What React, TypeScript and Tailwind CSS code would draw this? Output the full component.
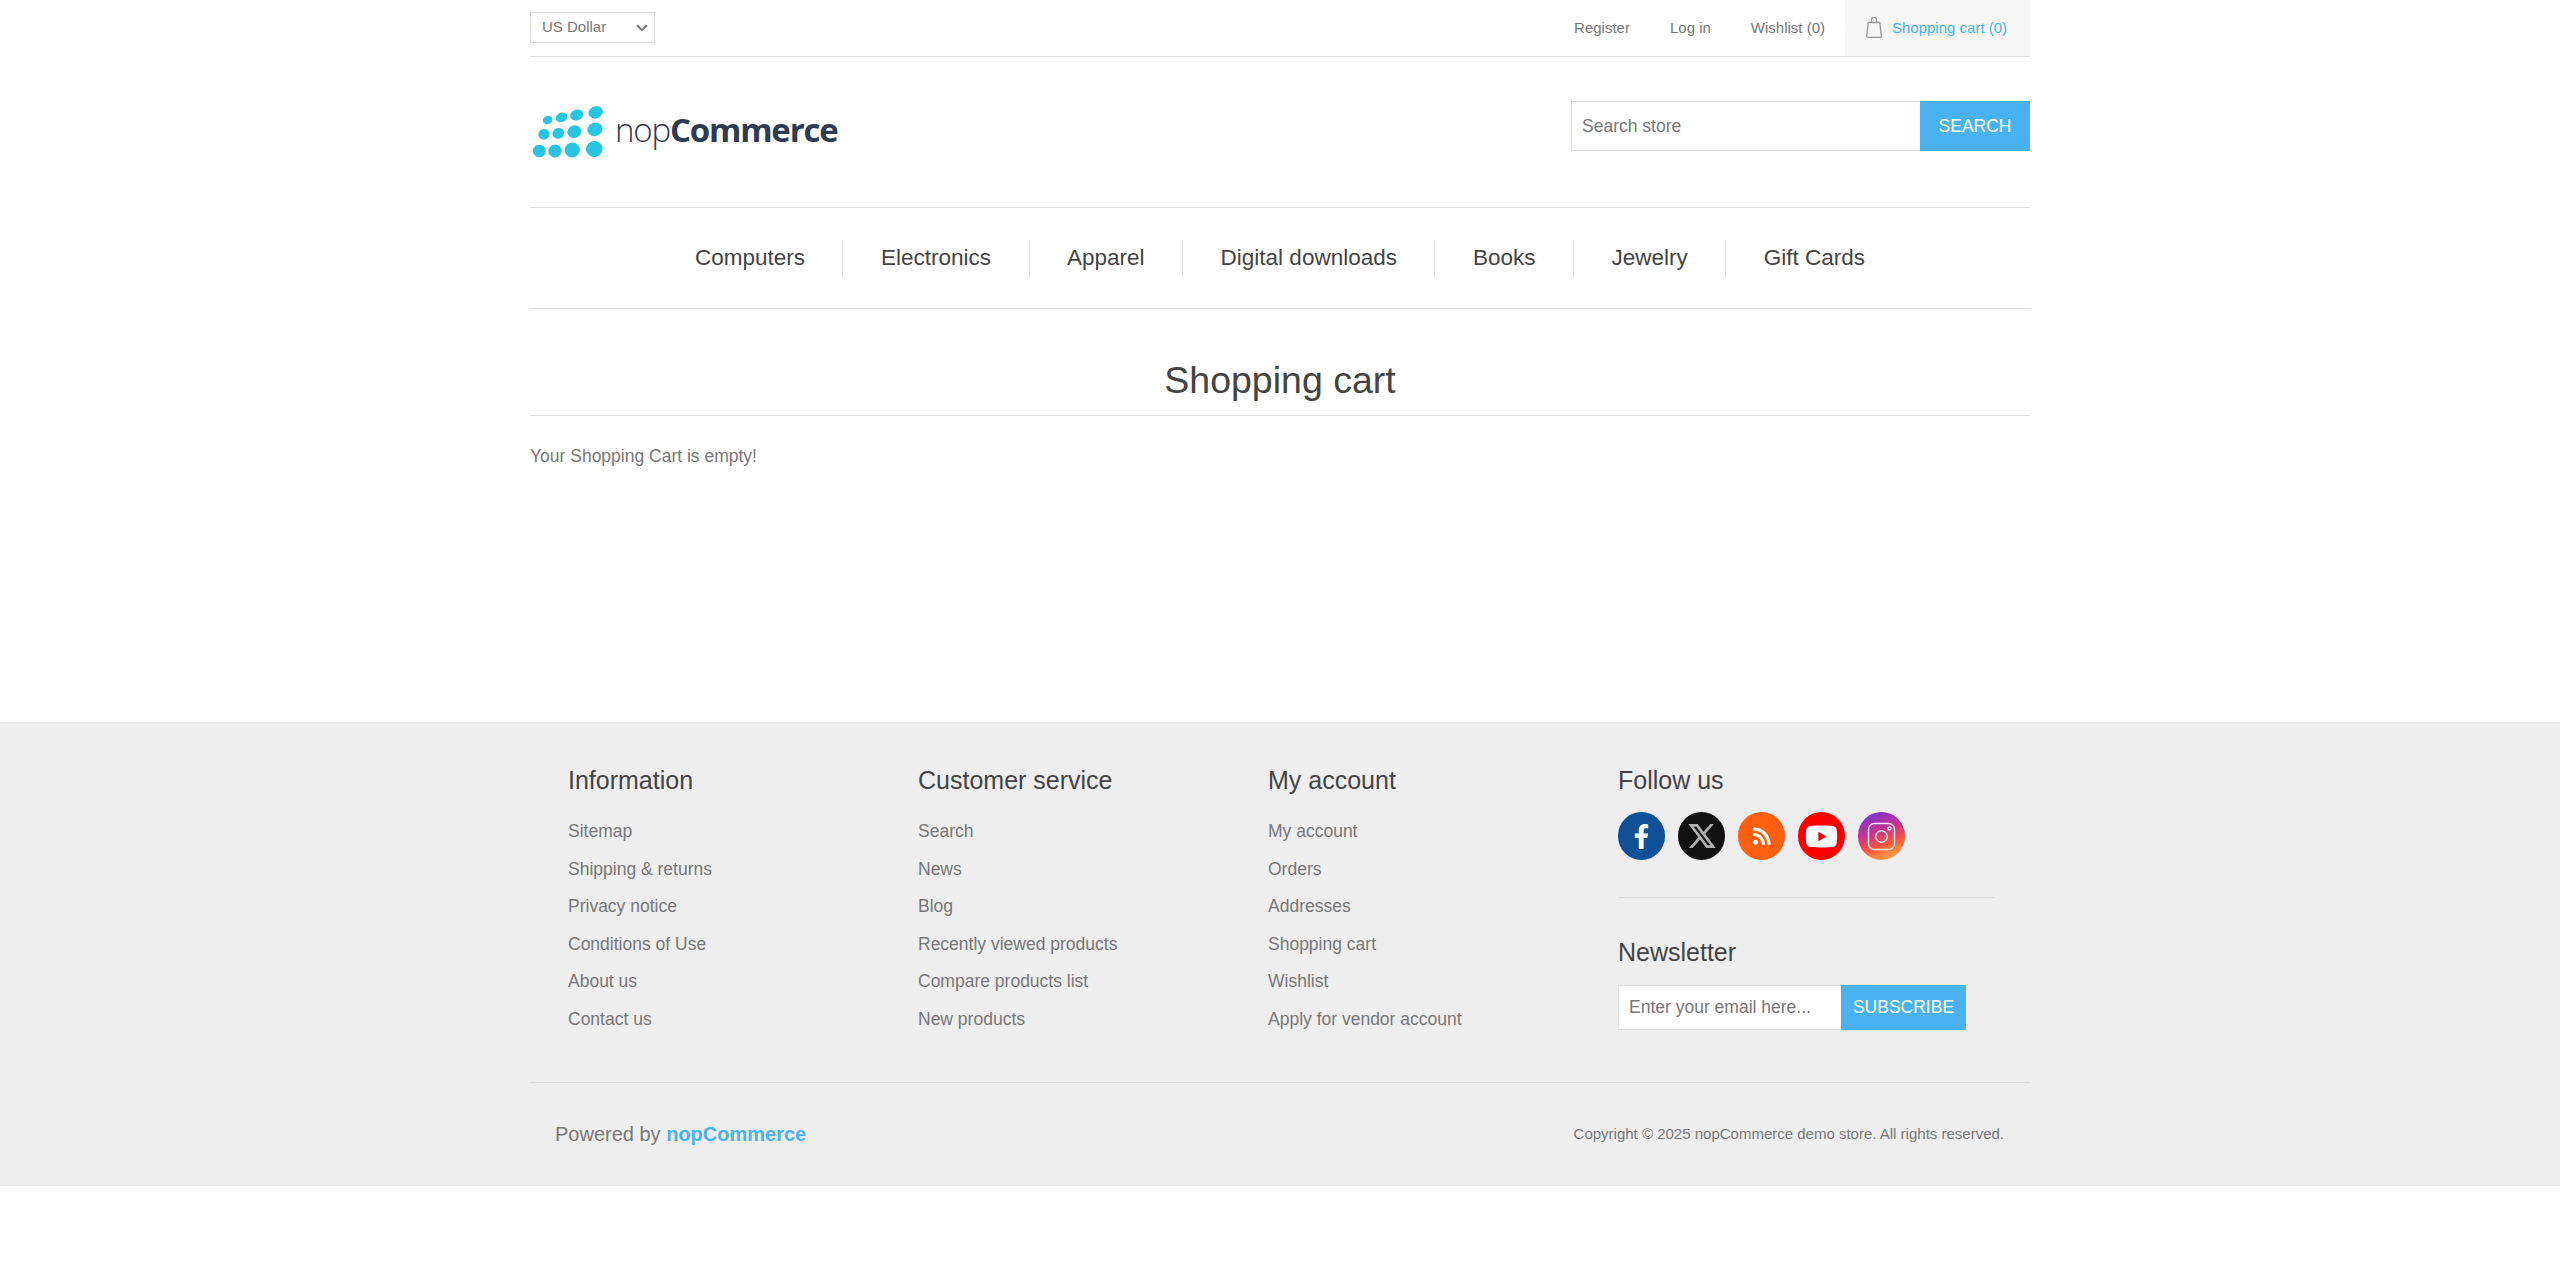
import { FaFacebookF, FaRss, FaYoutube } from "react-icons/fa";
import { RiTwitterXLine } from "react-icons/ri";

const menu = ["Computers", "Electronics", "Apparel", "Digital downloads", "Books", "Jewelry", "Gift Cards"];

const columns = [
  { title: "Information", links: ["Sitemap", "Shipping & returns", "Privacy notice", "Conditions of Use", "About us", "Contact us"] },
  { title: "Customer service", links: ["Search", "News", "Blog", "Recently viewed products", "Compare products list", "New products"] },
  { title: "My account", links: ["My account", "Orders", "Addresses", "Shopping cart", "Wishlist", "Apply for vendor account"] },
];

const dots = [
  [113, 360, 15, 12], [155, 352, 18, 14], [200, 345, 20, 16], [257, 337, 22, 18],
  [102, 403, 17, 16], [145, 400, 18, 16], [193, 395, 21, 19], [255, 388, 23, 20],
  [88, 453, 19, 19], [135, 453, 20, 19], [187, 450, 23, 22], [253, 447, 25, 24],
];

function Logo() {
  return (
    <div className="flex items-center h-[60px] pl-[1px]">
      <svg width="72" height="54" viewBox="63 315 216 162" className="shrink-0">
        {dots.map(([cx, cy, rx, ry], i) => (
          <ellipse key={i} cx={cx} cy={cy} rx={rx} ry={ry} fill="#26c6e3" transform={`rotate(-20 ${cx} ${cy})`} />
        ))}
      </svg>
      <div className="ml-[12px] mb-[5px] text-[33px] tracking-[-1.2px] leading-none text-[#2f3b4f] font-['Open_Sans',sans-serif]">
        <span className="font-light">nop</span>
        <span className="font-bold">Commerce</span>
      </div>
    </div>
  );
}

function BagIcon() {
  return (
    <svg width="16" height="21" viewBox="0 0 16 21" fill="none" stroke="#999999" strokeWidth="1.3" className="mr-[9px] -mt-[2px]">
      <path d="M2.2 5.5h11.6l1.5 13.6a1.2 1.2 0 0 1-1.2 1.3H1.9a1.2 1.2 0 0 1-1.2-1.3z" strokeLinejoin="round" />
      <path d="M5.6 5.5V2.6a2.4 2.4 0 0 1 4.8 0v2.9" />
    </svg>
  );
}

function Social() {
  return (
    <div className="flex gap-[13px] mt-[16px]">
      <div className="w-[47px] h-[48px] rounded-full bg-[#0f5097] flex items-center justify-center text-white">
        <FaFacebookF size={25} />
      </div>
      <div className="w-[47px] h-[48px] rounded-full bg-[#111111] flex items-center justify-center text-[#b0b0b0]">
        <RiTwitterXLine size={32} />
      </div>
      <div className="w-[47px] h-[48px] rounded-full bg-[#ff5f0f] flex items-center justify-center text-white">
        <FaRss size={20} />
      </div>
      <div className="w-[47px] h-[48px] rounded-full bg-[#ff0000] flex items-center justify-center text-white">
        <FaYoutube size={33} />
      </div>
      <div className="w-[47px] h-[48px] rounded-full bg-[linear-gradient(340deg,#fdb54a_5%,#f7583a_35%,#c8308f_60%,#7d37cf_90%)] flex items-center justify-center">
        <svg width="29" height="29" viewBox="0 0 29 29" fill="none" stroke="#f4e6f0" strokeWidth="1.4">
          <rect x="1.5" y="1.5" width="26" height="26" rx="6" />
          <circle cx="14.5" cy="14.5" r="5.8" />
          <circle cx="22.5" cy="6.5" r="1.5" />
        </svg>
      </div>
    </div>
  );
}

export default function App() {
  return (
    <div className="min-h-[1272px] bg-white font-['Liberation_Sans',Arial,sans-serif] text-[#777777]">
      <header className="w-[1500px] mx-auto">
        <div className="h-[57px] flex items-center justify-between border-b border-[#dddddd]">
          <div className="relative -mt-[1px]">
            <select className="appearance-none block w-[125px] h-[31px] border border-[#dddddd] bg-white px-[11px] text-[15px] text-[#777777]">
              <option>US Dollar</option>
            </select>
            <svg width="12" height="8" viewBox="0 0 12 8" fill="none" stroke="#777777" strokeWidth="2" className="absolute right-[7px] top-[12px]">
              <path d="M1 1.2l5 5 5-5" />
            </svg>
          </div>
          <div className="flex items-center h-full text-[15px]">
            <a className="mr-[40px]">Register</a>
            <a className="mr-[40px]">Log in</a>
            <a className="mr-[20px]">Wishlist (0)</a>
            <div className="h-full w-[185px] bg-[#f6f6f6] flex items-center pl-[21px] text-[#4ab2f1]">
              <BagIcon />
              <span className="ml-[1px]">Shopping cart (0)</span>
            </div>
          </div>
        </div>

        <div className="h-[151px] flex items-center justify-between border-b border-[#dddddd]">
          <Logo />
          <div className="flex -mt-[12px]">
            <input
              placeholder="Search store"
              className="w-[349px] h-[50px] border border-[#dddddd] border-r-0 px-[10px] text-[17.5px] outline-none placeholder:text-[#777777]"
            />
            <button className="w-[110px] h-[50px] bg-[#4ab2f1] text-white text-[17.5px]">SEARCH</button>
          </div>
        </div>

        <nav className="h-[101px] flex items-center justify-center border-b border-[#dddddd] text-[22.5px] text-[#444444]">
          {menu.map((item, i) => (
            <a key={item} className={`h-[37px] flex items-center px-[37.5px] border-[#dddddd] ${i > 0 ? "border-l" : ""}`}>
              {item}
            </a>
          ))}
        </nav>
      </header>

      <main className="w-[1500px] mx-auto h-[413px]">
        <h1 className="h-[107px] pt-[48px] text-center text-[37.5px] leading-[46px] text-[#444444] border-b border-[#dddddd]">Shopping cart</h1>
        <p className="mt-[29px] text-[17.5px] leading-[23px]">Your Shopping Cart is empty!</p>
      </main>

      <footer className="bg-[#eeeeee] h-[464px]">
        <div className="w-[1500px] mx-auto">
          <div className="h-[361px] flex pl-[38px] pt-[42px] border-b border-[#dddddd]">
            {columns.map((col) => (
              <div key={col.title} className="w-[350px]">
                <h3 className="text-[25px] leading-[32px] text-[#444444]">{col.title}</h3>
                <ul className="mt-[17px] text-[17.5px] leading-[37.5px]">
                  {col.links.map((link) => (
                    <li key={link}>{link}</li>
                  ))}
                </ul>
              </div>
            ))}
            <div className="w-[376px]">
              <h3 className="text-[25px] leading-[32px] text-[#444444]">Follow us</h3>
              <Social />
              <div className="mt-[37px] border-t border-[#dddddd] pt-[38px]">
                <h3 className="text-[25px] leading-[32px] text-[#444444]">Newsletter</h3>
                <div className="flex mt-[17px]">
                  <input
                    placeholder="Enter your email here..."
                    className="w-[223px] h-[45px] bg-white border border-[#dddddd] border-r-0 px-[10px] text-[17.5px] outline-none placeholder:text-[#777777]"
                  />
                  <button className="w-[125px] h-[45px] bg-[#4ab2f1] text-white text-[17.5px]">SUBSCRIBE</button>
                </div>
              </div>
            </div>
          </div>
          <div className="h-[102px] flex items-center justify-between pl-[25px] pr-[26px]">
            <div className="text-[20px]">
              Powered by <span className="font-bold text-[#4ab2f1]">nopCommerce</span>
            </div>
            <div className="text-[15px]">Copyright © 2025 nopCommerce demo store. All rights reserved.</div>
          </div>
        </div>
      </footer>
    </div>
  );
}
